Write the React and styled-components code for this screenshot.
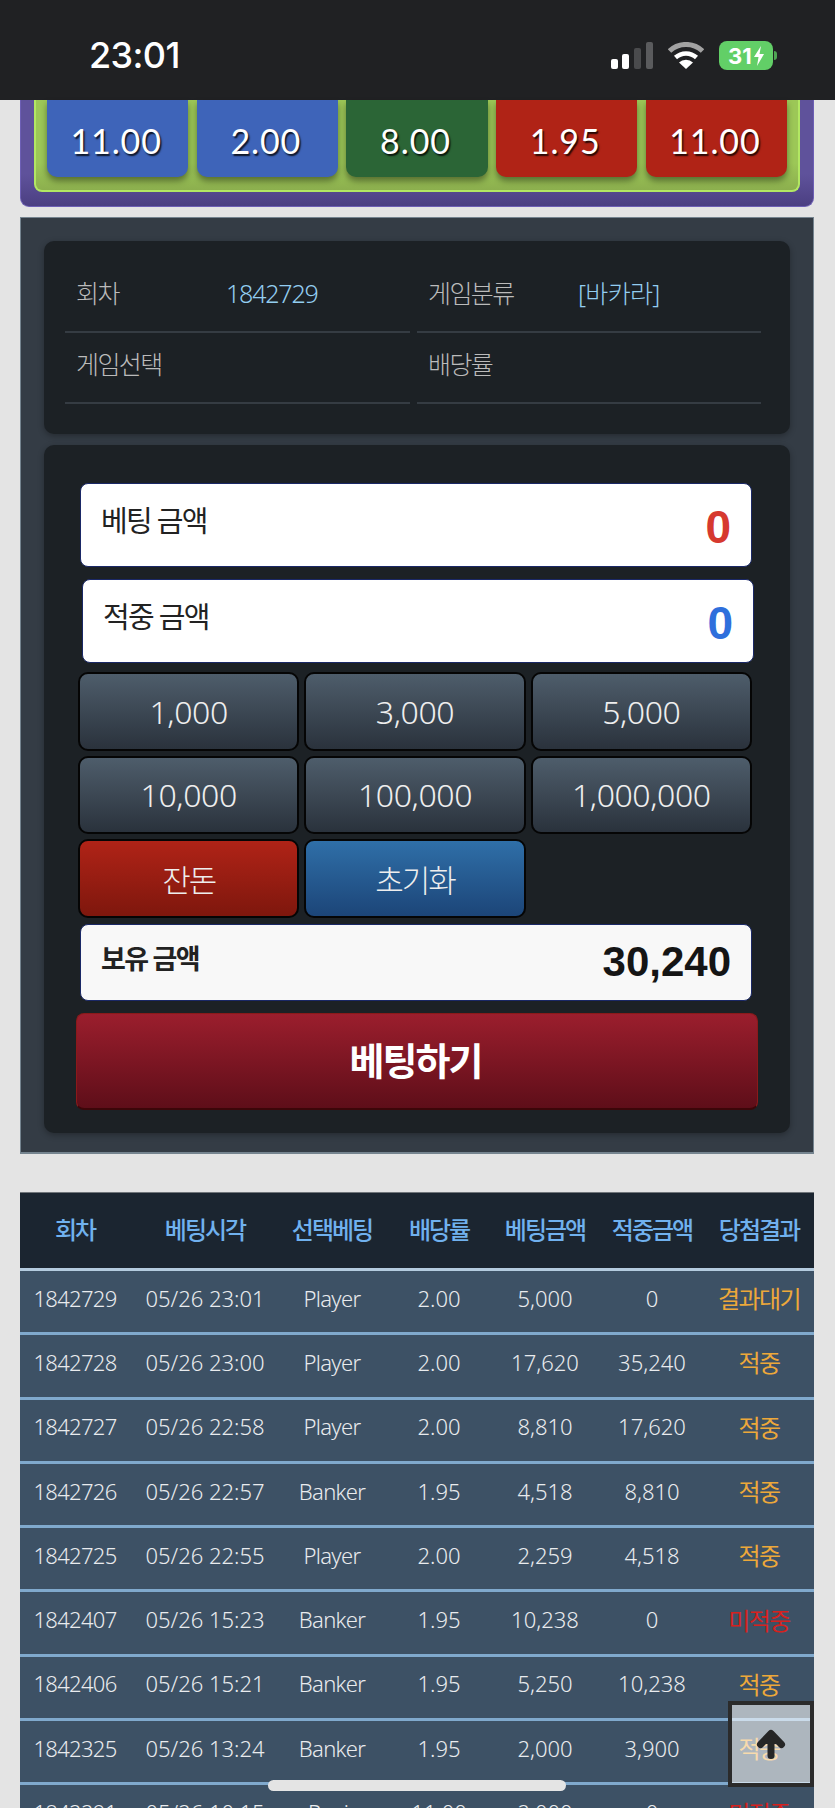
import React from "react";
import styled, { createGlobalStyle } from "styled-components";

const Global = createGlobalStyle`
  html, body { margin: 0; padding: 0; background: #e4e4e4; }
  body { width: 835px; height: 1808px; overflow: hidden; font-family: "Noto Sans", "Noto Sans CJK KR", sans-serif; }
  * { box-sizing: border-box; }
`;
const KR = `"Noto Sans", "Noto Sans CJK KR", sans-serif`;
const COLS = "110px 150px 104px 110px 102px 112px 102px";
const Page = styled.div`position: relative; width: 835px; height: 1808px; overflow: hidden; background: #e4e4e4;`;
const StatusBar = styled.header`height: 100px; background: #202123; display: flex; align-items: center; justify-content: space-between; padding: 6px 62px 0 89px;`;
const Clock = styled.span`font: 500 36px "Inter", sans-serif; color: #fff; letter-spacing: -0.6px; transform: translateY(2px);`;
const StatusIcons = styled.div`display: flex; align-items: center; gap: 15px; margin-top: 5px;`;
const OddsFrame = styled.section`margin: 0 21px 10px 20px; height: 107px; padding: 0 13px 15px; background: linear-gradient(#5f529b 70%, #4b3f82); border: solid #6d5fb5; border-width: 0 1px 1px; border-radius: 0 0 9px 9px;`;
const OddsInner = styled.div`height: 92px; background: linear-gradient(#9cc757 70%, #8caf4e); border: solid #b2e763; border-width: 0 2px 2px; border-radius: 0 0 8px 8px; padding: 0 11px; display: grid; grid-template-columns: repeat(5, 1fr); gap: 8.5px;`;
const OddsButton = styled.button`
  height: 77px; border: 0; border-radius: 0 0 10px 10px; padding: 0 3px 12px 0; color: #fff; background: ${p => p.$c};
  font: 400 34px "Lato", sans-serif; letter-spacing: 0.9px; text-shadow: 1.5px 1.5px 1.5px rgba(0,0,0,.8); box-shadow: 0 4px 6px rgba(0,0,0,.4);
  display: flex; align-items: flex-end; justify-content: center; line-height: 48px;
`;
const Panel = styled.section`margin: 0 21px 38px 20px; height: 937px; padding: 23px 23px 0; background: #343c45; border: 1px solid #75848f; border-bottom-width: 2px;`;
const InfoCard = styled.div`height: 193px; background: #1c2125; border-radius: 10px; padding: 21px 29px 0 21px; display: grid; grid-template-columns: 345px 344px; column-gap: 7px; grid-auto-rows: 71px; box-shadow: 0 2px 6px rgba(0,0,0,.3);`;
const InfoCell = styled.div`display: grid; grid-template-columns: 150px 1fr; padding: 0 0 6px 11px; align-items: center; border-bottom: 2px solid #353c43; font: 300 25px ${KR}; letter-spacing: -1.6px; line-height: 1; height: 71px;`;
const InfoLabel = styled.span`color: #bbb;`;
const InfoValue = styled.span`color: #93cdf0; letter-spacing: ${p => p.$num ? -1.2 : -0.7}px;`;
const BetCard = styled.div`margin-top: 11px; height: 688px; background: #1c2125; border-radius: 10px; padding: 38px 38px 0 34px; box-shadow: 0 2px 6px rgba(0,0,0,.3);`;
const AmountBox = styled.div`
  display: flex; justify-content: space-between; align-items: center; background: ${p => p.$bg || "#fff"}; border: 1px solid #1a2866; border-radius: 8px;
  height: ${p => p.$h}px; width: 672px; padding: 0 20px; margin: ${p => p.$top || 0}px 0 ${p => p.$bottom}px ${p => p.$shift ? 4 : 2}px;
`;
const AmountLabel = styled.span`font: ${p => p.$bold ? 700 : 400} ${p => p.$bold ? 27 : 29}px ${KR}; letter-spacing: -1.7px; color: #222; transform: translateY(-${p => p.$bold ? 5 : 6}px);`;
const AmountValue = styled.span`font: 700 ${p => p.$size}px "Liberation Sans", sans-serif; color: ${p => p.$c}; transform: translateY(${p => p.$dy}px);`;
const ChipGrid = styled.div`display: grid; grid-template-columns: repeat(3, 221.33px); gap: 5px; grid-auto-rows: 78.5px; margin-top: -3px;`;
const Chip = styled.button`
  border: 2px solid #050505; border-radius: 10px; background: linear-gradient(${p => p.$from}, ${p => p.$to}); color: #eee;
  font: 300 ${p => p.$kr ? 31 : 32}px ${KR}; letter-spacing: ${p => p.$kr ? -2 : -0.4}px; padding: 0;
`;
const SubmitButton = styled.button`display: block; width: 682px; height: 97px; margin: 12px 0 0 -2px; background: linear-gradient(#9b1e2d, #5e0e19); border: 1px solid #8a1a1a; border-bottom: 2px solid #3c0609; border-radius: 8px; color: #fff; font: 700 38px ${KR}; letter-spacing: -2px; padding: 0 3px 5px 0;`;
const Table = styled.section`margin: 0 21px 0 20px;`;
const HeadRow = styled.div`height: 79px; display: grid; grid-template-columns: ${COLS}; align-items: center; background: #1b2530; border-top: 1px solid #70757a; border-bottom: 3px solid #b4cbde; padding-bottom: 4px;`;
const Head = styled.span`text-align: center; font: 500 24px ${KR}; letter-spacing: -2px; color: #70b1ee;`;
const Row = styled.div`height: 64.3px; display: grid; grid-template-columns: ${COLS}; align-items: center; background: #3d5165; border-bottom: 3px solid #80a9cd; padding-bottom: 8px;`;
const Cell = styled.span`text-align: center; font: 300 22px ${KR}; letter-spacing: ${p => p.$tight ? -0.7 : 0}px; color: #e9ebee; white-space: nowrap;`;
const ResultCell = styled.span`text-align: center; font: 400 24px ${KR}; letter-spacing: -1.6px; color: ${p => p.$c}; white-space: nowrap;`;
const ScrollTop = styled.button`position: absolute; left: 728px; top: 1701px; width: 86px; height: 86px; border: 4px solid #2b2b2b; background: rgba(255,255,255,.58); padding: 0; display: flex; align-items: center; justify-content: center;`;
const HomeBar = styled.div`position: absolute; left: 268px; top: 1780px; width: 298px; height: 11px; border-radius: 6px; background: #e4e4e4;`;

const odds = [["11.00", "#3e64b9"], ["2.00", "#3e64b9"], ["8.00", "#2b6536"], ["1.95", "#b02316"], ["11.00", "#b02316"]];
const heads = ["회차", "베팅시각", "선택베팅", "배당률", "베팅금액", "적중금액", "당첨결과"];
const orange = "#eda83a";
const red = "#d6211e";
const rows = [
  ["1842729", "05/26 23:01", "Player", "2.00", "5,000", "0", "결과대기", orange],
  ["1842728", "05/26 23:00", "Player", "2.00", "17,620", "35,240", "적중", orange],
  ["1842727", "05/26 22:58", "Player", "2.00", "8,810", "17,620", "적중", orange],
  ["1842726", "05/26 22:57", "Banker", "1.95", "4,518", "8,810", "적중", orange],
  ["1842725", "05/26 22:55", "Player", "2.00", "2,259", "4,518", "적중", orange],
  ["1842407", "05/26 15:23", "Banker", "1.95", "10,238", "0", "미적중", red],
  ["1842406", "05/26 15:21", "Banker", "1.95", "5,250", "10,238", "적중", orange],
  ["1842325", "05/26 13:24", "Banker", "1.95", "2,000", "3,900", "적중", orange],
  ["1842291", "05/26 10:15", "Ppair", "11.00", "2,000", "0", "미적중", red],
];
const grey = ["#4e5d6b", "#2a323c"];

const Signal = () => (
  <svg width="42" height="28" viewBox="0 0 42 28">
    <rect x="0" y="17" width="7" height="10" rx="2" fill="#fff" />
    <rect x="11" y="12" width="7" height="15" rx="2" fill="#fff" />
    <rect x="23" y="6" width="7" height="21" rx="2" fill="#4a4b4d" />
    <rect x="35" y="0" width="7" height="27" rx="2" fill="#5a5b5d" />
  </svg>
);
const Wifi = () => (
  <svg width="36" height="28" viewBox="0 0 36 28">
    <path d="M1.5 9 A 24 24 0 0 1 34.5 9" fill="none" stroke="#a2a2a2" strokeWidth="5" />
    <path d="M7.5 15.5 A 15.5 15.5 0 0 1 28.5 15.5" fill="none" stroke="#fff" strokeWidth="4.5" />
    <path d="M18 27 L11 20.5 A 10 10 0 0 1 25 20.5 Z" fill="#fff" />
  </svg>
);
const BatteryBody = styled.div`position: relative; width: 54px; height: 29px; background: #62cf67; border-radius: 8px; color: #fff; font: 700 22px "Inter", sans-serif; display: flex; align-items: center; padding-left: 9px; gap: 1px;`;
const BatteryTip = styled.i`position: absolute; right: -4px; top: 10px; width: 3px; height: 9px; background: #4ea653; border-radius: 0 3px 3px 0;`;
const Battery = () => (
  <BatteryBody>31
    <svg width="12" height="20" viewBox="0 0 12 20"><path d="M8 0 L1 11 H5.5 L4 20 L11 8 H6.5 Z" fill="#fff" /></svg>
    <BatteryTip />
  </BatteryBody>
);
const Arrow = () => (
  <svg width="30" height="30" viewBox="0 0 30 30">
    <path d="M4.5 15.5 L15 4.5 L25.5 15.5 M15 7 V26.5" fill="none" stroke="#262626" strokeWidth="7" strokeLinecap="round" strokeLinejoin="round" />
    <path d="M15 6 L22 15 H8 Z" fill="#262626" />
  </svg>
);

export default function App() {
  return (
    <Page>
      <Global />
      <StatusBar>
        <Clock>23:01</Clock>
        <StatusIcons><Signal /><Wifi /><Battery /></StatusIcons>
      </StatusBar>
      <OddsFrame>
        <OddsInner>
          {odds.map(([t, c], i) => <OddsButton key={i} $c={c}>{t}</OddsButton>)}
        </OddsInner>
      </OddsFrame>
      <Panel>
        <InfoCard>
          <InfoCell><InfoLabel>회차</InfoLabel><InfoValue $num>1842729</InfoValue></InfoCell>
          <InfoCell><InfoLabel>게임분류</InfoLabel><InfoValue>[바카라]</InfoValue></InfoCell>
          <InfoCell><InfoLabel>게임선택</InfoLabel></InfoCell>
          <InfoCell><InfoLabel>배당률</InfoLabel></InfoCell>
        </InfoCard>
        <BetCard>
          <AmountBox $h={84} $bottom={12}><AmountLabel>베팅 금액</AmountLabel><AmountValue $size={46} $dy={2} $c="#d6392f">0</AmountValue></AmountBox>
          <AmountBox $h={84} $bottom={12} $shift><AmountLabel>적중 금액</AmountLabel><AmountValue $size={46} $dy={2} $c="#2f6fdc">0</AmountValue></AmountBox>
          <ChipGrid>
            {["1,000", "3,000", "5,000", "10,000", "100,000", "1,000,000"].map(t => <Chip key={t} $from={grey[0]} $to={grey[1]}>{t}</Chip>)}
            <Chip $kr $from="#b02317" $to="#7e170d">잔돈</Chip>
            <Chip $kr $from="#2f6fa8" $to="#1c4578">초기화</Chip>
          </ChipGrid>
          <AmountBox $h={77} $bg="#f8f8f8" $top={6} $bottom={0}><AmountLabel $bold>보유 금액</AmountLabel><AmountValue $size={42} $dy={0} $c="#151515">30,240</AmountValue></AmountBox>
          <SubmitButton>베팅하기</SubmitButton>
        </BetCard>
      </Panel>
      <Table>
        <HeadRow>{heads.map(h => <Head key={h}>{h}</Head>)}</HeadRow>
        {rows.map(r => (
          <Row key={r[0]}>
            {r.slice(0, 6).map((v, i) => <Cell key={i} $tight={i === 0 || i === 2}>{v}</Cell>)}
            <ResultCell $c={r[7]}>{r[6]}</ResultCell>
          </Row>
        ))}
      </Table>
      <ScrollTop aria-label="top"><Arrow /></ScrollTop>
      <HomeBar />
    </Page>
  );
}
